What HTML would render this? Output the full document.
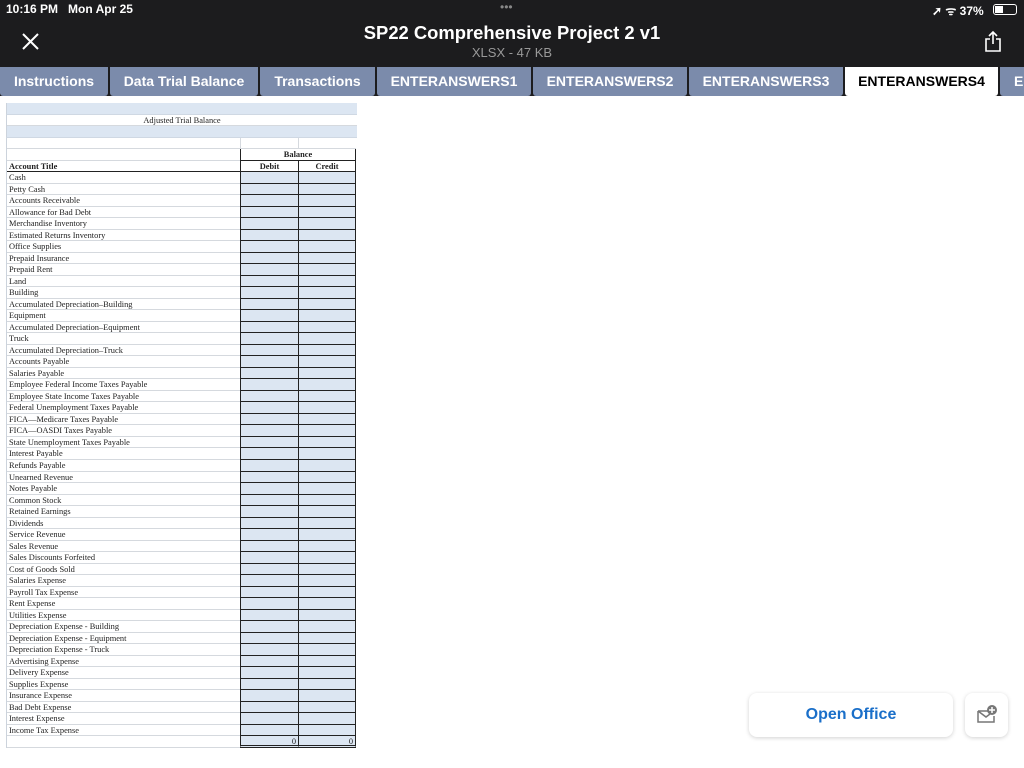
<!DOCTYPE html>
<html><head><meta charset="utf-8"><style>
*{box-sizing:border-box;margin:0;padding:0}
body{width:1024px;height:768px;background:#fff;position:relative;overflow:hidden;font-family:"Liberation Sans",sans-serif}
.hdr{position:absolute;left:0;top:0;width:1024px;height:67px;background:#1c1c1e;color:#fff}
.tabs{position:absolute;left:0;top:67px;width:1024px;height:29px;background:#1c1c1e}
.tab{position:absolute;top:0;height:29px;background:#7b8bab;color:#fff;font-weight:bold;font-size:14px;line-height:28px;text-align:center;border-radius:0 0 3px 3px}
.tab.on{background:#fff;color:#000}
.sheet{position:absolute;left:6px;top:103px;width:351px;font-family:"Liberation Serif",serif;font-size:8.4px;color:#222}
.r{height:11.52px;display:flex;border-left:1px solid #ccd3dc}
.r>div{height:100%;line-height:11px;white-space:nowrap;overflow:hidden}
.t{width:233px;border-bottom:1px solid #d5d9de;padding-left:2px}
.d,.c{width:58px;background:#dce6f2;border-bottom:1px solid #222;border-left:1px solid #222}
.c{border-right:1px solid #222}
.btn{position:absolute;left:749px;top:693px;width:204px;height:44px;border-radius:8px;background:#fff;box-shadow:0 1px 4px rgba(0,0,0,.18);color:#1a6fc9;font-weight:bold;font-size:16px;text-align:center;line-height:44px}
.ib{position:absolute;left:965px;top:693px;width:43px;height:44px;border-radius:8px;background:#fff;box-shadow:0 1px 4px rgba(0,0,0,.18)}
</style></head><body>
<div class="hdr">
<div style="position:absolute;left:6px;top:2px;font-size:12px;font-weight:bold">10:16 PM&nbsp;&nbsp; Mon Apr 25</div>
<div style="position:absolute;left:500px;top:0;font-size:12px;color:#888">•••</div>
<div style="position:absolute;left:932px;top:2px;font-size:12px;font-weight:bold">➚ ᯤ 37%</div>
<div style="position:absolute;left:993px;top:4px;width:24px;height:11px;border:1px solid #fff;border-radius:3px"><div style="width:8px;height:7px;background:#fff;margin:1px"></div></div>
<svg style="position:absolute;left:22px;top:33px" width="17" height="17"><path d="M1 1L16 16M16 1L1 16" stroke="#fff" stroke-width="2"/></svg>
<div style="position:absolute;left:0;width:1024px;top:22px;text-align:center;font-size:18.4px;font-weight:bold">SP22 Comprehensive Project 2 v1</div>
<div style="position:absolute;left:0;width:1024px;top:45px;text-align:center;font-size:13px;color:#999">XLSX - 47 KB</div>
<svg style="position:absolute;left:984px;top:30px" width="18" height="22"><path d="M9 2V14M5 6L9 2L13 6M6 9H2V21H16V9H12" stroke="#fff" stroke-width="1.6" fill="none"/></svg>
</div>
<div class="tabs">
<div class="tab" style="left:0;width:108px">Instructions</div>
<div class="tab" style="left:110px;width:148px">Data Trial Balance</div>
<div class="tab" style="left:260px;width:115px">Transactions</div>
<div class="tab" style="left:377px;width:154px">ENTERANSWERS1</div>
<div class="tab" style="left:533px;width:154px">ENTERANSWERS2</div>
<div class="tab" style="left:689px;width:154px">ENTERANSWERS3</div>
<div class="tab on" style="left:845px;width:153px">ENTERANSWERS4</div>
<div class="tab" style="left:1000px;width:40px;text-align:left;padding-left:14px">E</div>
</div>
<div class="sheet">
<div class="r" style="background:#dce6f2;border-bottom:1px solid #cfd8e3"></div>
<div class="r"><div style="width:350px;text-align:center;border-bottom:1px solid #d5d9de">Adjusted Trial Balance</div></div>
<div class="r" style="background:#dce6f2;border-bottom:1px solid #cfd8e3"></div>
<div class="r"><div class="t"></div><div style="width:58px;border-left:1px solid #d5d9de;border-bottom:1px solid #d5d9de"></div><div style="width:58px;border-left:1px solid #d5d9de;border-bottom:1px solid #d5d9de"></div></div>
<div class="r"><div class="t"></div><div style="width:116px;border-left:1px solid #222;border-right:1px solid #222;border-bottom:1px solid #222;text-align:center;font-weight:bold">Balance</div></div>
<div class="r"><div class="t" style="font-weight:bold;border-bottom-color:#222">Account Title</div><div class="d" style="background:#fff;text-align:center;font-weight:bold">Debit</div><div class="c" style="background:#fff;text-align:center;font-weight:bold">Credit</div></div>
<div class="r"><div class="t">Cash</div><div class="d"></div><div class="c"></div></div>
<div class="r"><div class="t">Petty Cash</div><div class="d"></div><div class="c"></div></div>
<div class="r"><div class="t">Accounts Receivable</div><div class="d"></div><div class="c"></div></div>
<div class="r"><div class="t">Allowance for Bad Debt</div><div class="d"></div><div class="c"></div></div>
<div class="r"><div class="t">Merchandise Inventory</div><div class="d"></div><div class="c"></div></div>
<div class="r"><div class="t">Estimated Returns Inventory</div><div class="d"></div><div class="c"></div></div>
<div class="r"><div class="t">Office Supplies</div><div class="d"></div><div class="c"></div></div>
<div class="r"><div class="t">Prepaid Insurance</div><div class="d"></div><div class="c"></div></div>
<div class="r"><div class="t">Prepaid Rent</div><div class="d"></div><div class="c"></div></div>
<div class="r"><div class="t">Land</div><div class="d"></div><div class="c"></div></div>
<div class="r"><div class="t">Building</div><div class="d"></div><div class="c"></div></div>
<div class="r"><div class="t">Accumulated Depreciation–Building</div><div class="d"></div><div class="c"></div></div>
<div class="r"><div class="t">Equipment</div><div class="d"></div><div class="c"></div></div>
<div class="r"><div class="t">Accumulated Depreciation–Equipment</div><div class="d"></div><div class="c"></div></div>
<div class="r"><div class="t">Truck</div><div class="d"></div><div class="c"></div></div>
<div class="r"><div class="t">Accumulated Depreciation–Truck</div><div class="d"></div><div class="c"></div></div>
<div class="r"><div class="t">Accounts Payable</div><div class="d"></div><div class="c"></div></div>
<div class="r"><div class="t">Salaries Payable</div><div class="d"></div><div class="c"></div></div>
<div class="r"><div class="t">Employee Federal Income Taxes Payable</div><div class="d"></div><div class="c"></div></div>
<div class="r"><div class="t">Employee State Income Taxes Payable</div><div class="d"></div><div class="c"></div></div>
<div class="r"><div class="t">Federal Unemployment Taxes Payable</div><div class="d"></div><div class="c"></div></div>
<div class="r"><div class="t">FICA—Medicare Taxes Payable</div><div class="d"></div><div class="c"></div></div>
<div class="r"><div class="t">FICA—OASDI Taxes Payable</div><div class="d"></div><div class="c"></div></div>
<div class="r"><div class="t">State Unemployment Taxes Payable</div><div class="d"></div><div class="c"></div></div>
<div class="r"><div class="t">Interest Payable</div><div class="d"></div><div class="c"></div></div>
<div class="r"><div class="t">Refunds Payable</div><div class="d"></div><div class="c"></div></div>
<div class="r"><div class="t">Unearned Revenue</div><div class="d"></div><div class="c"></div></div>
<div class="r"><div class="t">Notes Payable</div><div class="d"></div><div class="c"></div></div>
<div class="r"><div class="t">Common Stock</div><div class="d"></div><div class="c"></div></div>
<div class="r"><div class="t">Retained Earnings</div><div class="d"></div><div class="c"></div></div>
<div class="r"><div class="t">Dividends</div><div class="d"></div><div class="c"></div></div>
<div class="r"><div class="t">Service Revenue</div><div class="d"></div><div class="c"></div></div>
<div class="r"><div class="t">Sales Revenue</div><div class="d"></div><div class="c"></div></div>
<div class="r"><div class="t">Sales Discounts Forfeited</div><div class="d"></div><div class="c"></div></div>
<div class="r"><div class="t">Cost of Goods Sold</div><div class="d"></div><div class="c"></div></div>
<div class="r"><div class="t">Salaries Expense</div><div class="d"></div><div class="c"></div></div>
<div class="r"><div class="t">Payroll Tax Expense</div><div class="d"></div><div class="c"></div></div>
<div class="r"><div class="t">Rent Expense</div><div class="d"></div><div class="c"></div></div>
<div class="r"><div class="t">Utilities Expense</div><div class="d"></div><div class="c"></div></div>
<div class="r"><div class="t">Depreciation Expense - Building</div><div class="d"></div><div class="c"></div></div>
<div class="r"><div class="t">Depreciation Expense - Equipment</div><div class="d"></div><div class="c"></div></div>
<div class="r"><div class="t">Depreciation Expense - Truck</div><div class="d"></div><div class="c"></div></div>
<div class="r"><div class="t">Advertising Expense</div><div class="d"></div><div class="c"></div></div>
<div class="r"><div class="t">Delivery Expense</div><div class="d"></div><div class="c"></div></div>
<div class="r"><div class="t">Supplies Expense</div><div class="d"></div><div class="c"></div></div>
<div class="r"><div class="t">Insurance Expense</div><div class="d"></div><div class="c"></div></div>
<div class="r"><div class="t">Bad Debt Expense</div><div class="d"></div><div class="c"></div></div>
<div class="r"><div class="t">Interest Expense</div><div class="d"></div><div class="c"></div></div>
<div class="r"><div class="t">Income Tax Expense</div><div class="d"></div><div class="c"></div></div>
<div class="r"><div class="t"></div><div class="d" style="text-align:right;padding-right:2px;border-bottom:3px double #222">0</div><div class="c" style="text-align:right;padding-right:2px;border-bottom:3px double #222">0</div></div>
</div>
<div class="btn">Open Office</div>
<div class="ib"><svg style="position:absolute;left:11px;top:11px" width="22" height="20"><path d="M2 7H12M2 7V18H18V12M2 7L10 13L14 10" stroke="#777" stroke-width="1.5" fill="none"/><circle cx="16" cy="6" r="5" fill="#777"/><path d="M16 3V9M13 6H19" stroke="#fff" stroke-width="1.5"/></svg></div>
</body></html>
